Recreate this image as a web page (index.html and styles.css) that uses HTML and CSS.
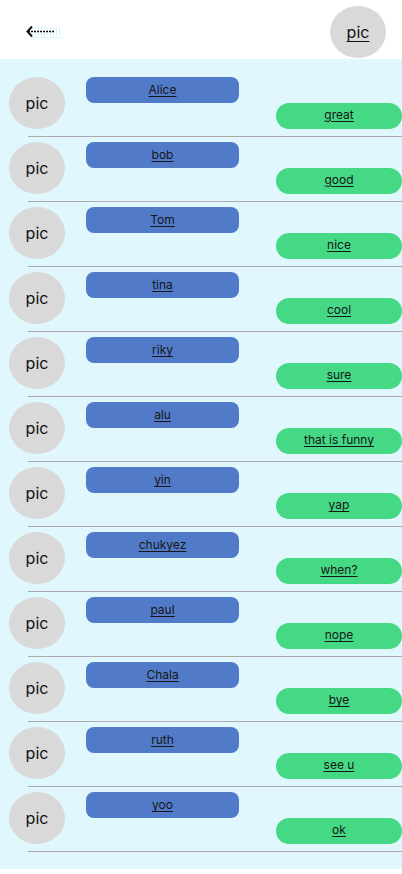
FILE: index.html
```html
<!DOCTYPE html>
<html lang="en">
<head>
<meta charset="utf-8">
<title>Chats</title>
<link rel="stylesheet" href="styles.css">
</head>
<body>
<header class="topbar">
  <a class="back" href="#">
    <svg width="36" height="14" viewBox="0 0 36 14">
      <g stroke="#d2f6fb" stroke-width="1">
        <line x1="9.5" y1="2" x2="9.5" y2="11"/><line x1="12.5" y1="2" x2="12.5" y2="11"/>
        <line x1="15.5" y1="2" x2="15.5" y2="11"/><line x1="18.5" y1="2" x2="18.5" y2="11"/>
        <line x1="21.5" y1="2" x2="21.5" y2="11"/><line x1="24.5" y1="2" x2="24.5" y2="11"/>
        <line x1="27.5" y1="2" x2="27.5" y2="11"/><line x1="30.5" y1="2" x2="30.5" y2="11"/>
        <line x1="33.5" y1="2" x2="33.5" y2="11"/>
        <line x1="6" y1="12.5" x2="36" y2="12.5"/>
      </g>
      <path d="M6 1.5 L1.5 6.5 L6 11.5" fill="none" stroke="#111" stroke-width="2"/>
      <line x1="2" y1="6.5" x2="28" y2="6.5" stroke="#111" stroke-width="1.5" stroke-dasharray="2 1"/>
    </svg>
  </a>
  <a class="avatar avatar-head" href="#">pic</a>
</header>
<main class="list">
  <div class="item"><div class="avatar">pic</div><div class="bubbles"><a class="name" href="#">Alice</a><a class="msg" href="#">great</a></div></div>
  <div class="item"><div class="avatar">pic</div><div class="bubbles"><a class="name" href="#">bob</a><a class="msg" href="#">good</a></div></div>
  <div class="item"><div class="avatar">pic</div><div class="bubbles"><a class="name" href="#">Tom</a><a class="msg" href="#">nice</a></div></div>
  <div class="item"><div class="avatar">pic</div><div class="bubbles"><a class="name" href="#">tina</a><a class="msg" href="#">cool</a></div></div>
  <div class="item"><div class="avatar">pic</div><div class="bubbles"><a class="name" href="#">riky</a><a class="msg" href="#">sure</a></div></div>
  <div class="item"><div class="avatar">pic</div><div class="bubbles"><a class="name" href="#">alu</a><a class="msg" href="#">that is funny</a></div></div>
  <div class="item"><div class="avatar">pic</div><div class="bubbles"><a class="name" href="#">yin</a><a class="msg" href="#">yap</a></div></div>
  <div class="item"><div class="avatar">pic</div><div class="bubbles"><a class="name" href="#">chukyez</a><a class="msg" href="#">when?</a></div></div>
  <div class="item"><div class="avatar">pic</div><div class="bubbles"><a class="name" href="#">paul</a><a class="msg" href="#">nope</a></div></div>
  <div class="item"><div class="avatar">pic</div><div class="bubbles"><a class="name" href="#">Chala</a><a class="msg" href="#">bye</a></div></div>
  <div class="item"><div class="avatar">pic</div><div class="bubbles"><a class="name" href="#">ruth</a><a class="msg" href="#">see u</a></div></div>
  <div class="item"><div class="avatar">pic</div><div class="bubbles"><a class="name" href="#">yoo</a><a class="msg" href="#">ok</a></div></div>
</main>
</body>
</html>
```
FILE: styles.css
```css
* { box-sizing: border-box; }
html, body { margin: 0; padding: 0; background: #fff; }
body {
  font-family: Inter, "Noto Sans", sans-serif;
  color: #111;
  width: 402px;
}
a { color: #111; }

.topbar {
  height: 59px;
  display: flex;
  align-items: center;
  justify-content: space-between;
  padding: 0 16px 0 26px;
  background: #fff;
}
.back {
  display: flex;
  width: 36px;
  height: 14px;
  margin-top: 5px;
}
.back svg { display: block; }

.avatar {
  width: 56px;
  height: 52px;
  flex: none;
  border-radius: 50%;
  background: #d9d9d9;
  display: flex;
  align-items: center;
  justify-content: center;
  font-size: 16px;
  color: #111;
}
.avatar-head {
  text-decoration: underline;
  text-underline-offset: 3px;
  margin-top: 5px;
}

.list {
  background: #dff7fd;
  padding: 13px 0 17px;
}
.item {
  display: flex;
  padding: 5px 0 8px 9px;
  position: relative;
}
.item::after {
  content: "";
  position: absolute;
  left: 28px;
  right: 0;
  bottom: 0;
  height: 1px;
  background: #aaaaaa;
}
.bubbles {
  flex: 1;
  display: flex;
  flex-direction: column;
  margin-left: 21px;
  height: 52px;
}
.name, .msg {
  height: 26px;
  flex: none;
  font-size: 12px;
  text-align: center;
  text-underline-offset: 2px;
  color: #161616;
}
.name {
  width: 153px;
  align-self: flex-start;
  background: #517bc8;
  border-radius: 8px;
  line-height: 26px;
}
.msg {
  width: 126px;
  align-self: flex-end;
  background: #45d986;
  border-radius: 13px;
  line-height: 22px;
  padding-top: 1px;
}
```
